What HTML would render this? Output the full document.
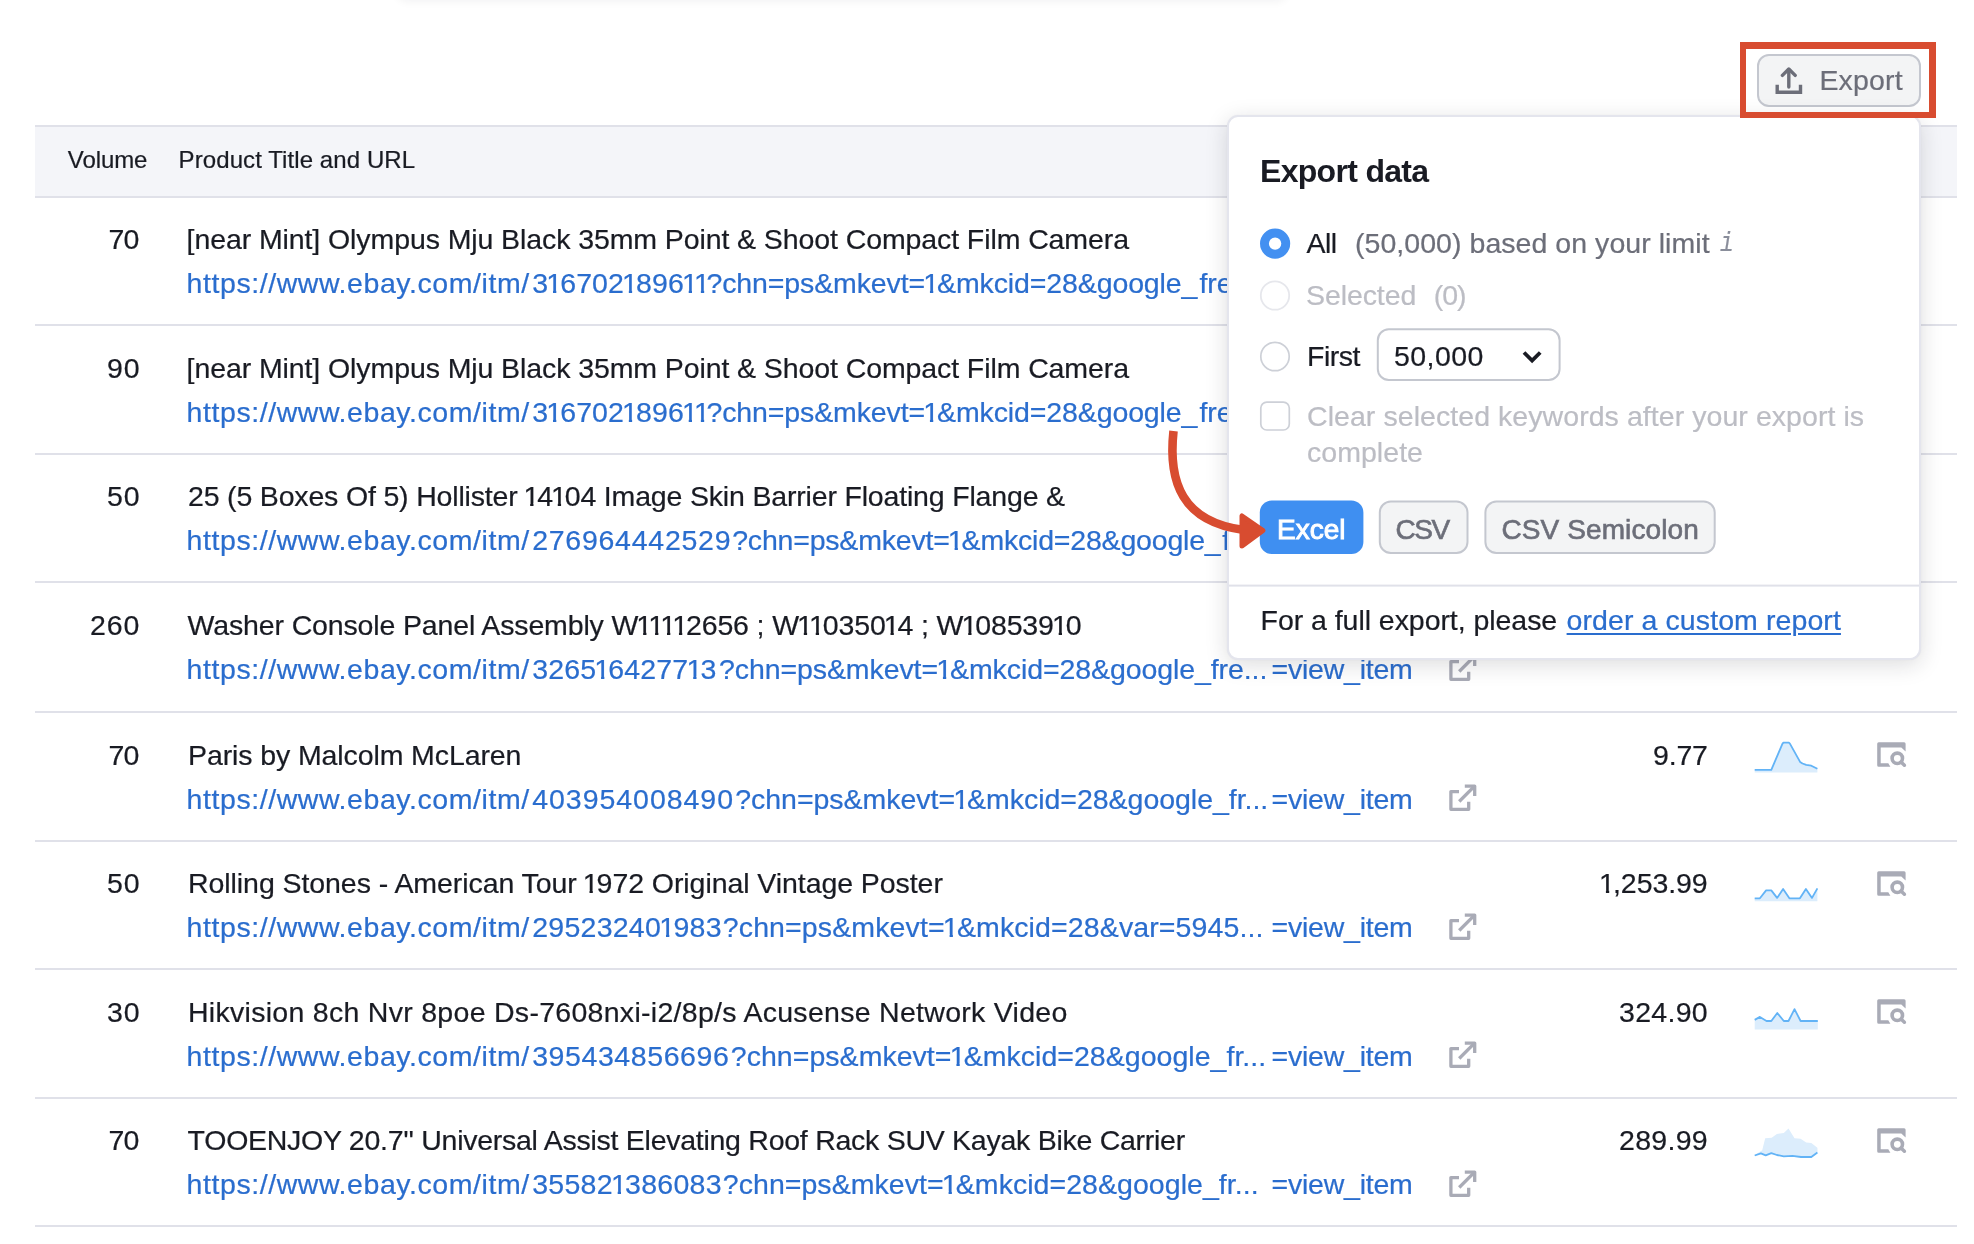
<!DOCTYPE html>
<html lang="en"><head><meta charset="utf-8"><title>Export data</title>
<style>
*{box-sizing:border-box;margin:0;padding:0}
html,body{width:1974px;height:1244px;overflow:hidden;background:#fff}
body{position:relative;font-family:"Liberation Sans",Arial,sans-serif;color:#191b23;font-size:28px}
.abs{position:absolute}
.t{position:absolute;white-space:nowrap;color:#191b23;-webkit-text-stroke:0.22px currentColor}
.t i{font-style:normal;display:inline-block;margin:0 -1.9px;clip-path:polygon(0 0,100% 0,100% 24px,10.1px 24px,10.1px 100%,6.8px 100%,6.8px 24px,0 24px)}
.t.lk{color:#2a6dce}
.t.g{color:#6c6e79}
.t.g2{color:#8a8e9b}
.t.d{color:#bcbdc4}
.t.b{font-weight:bold;-webkit-text-stroke:0}
.t.w{color:#fff}
.t.m{-webkit-text-stroke:0.65px currentColor}
.t.m.w{-webkit-text-stroke:0.95px currentColor}
.t.ul span{text-decoration:underline;text-decoration-thickness:2px;text-underline-offset:3px}
.topshadow{position:absolute;left:396px;top:-12px;width:892px;height:12px;border-radius:0 0 14px 14px;box-shadow:0 2px 8px rgba(25,27,35,.05)}
.thead{position:absolute;left:35px;top:125px;width:1922px;height:73px;background:#f4f5f9;border-top:2px solid #e0e1e9;border-bottom:2px solid #e0e1e9}
.sep{position:absolute;left:35px;width:1922px;height:2px;background:#e0e1e9}
.ext{position:absolute;left:1449px}
.serp{position:absolute;left:1877px}
.spark{position:absolute;left:1754px}
#root{position:absolute;left:0;top:0;width:1974px;height:1244px;overflow:hidden;will-change:transform}
</style></head><body><div id="root">
<div class="topshadow"></div>
<div class="thead"></div>

<div class="t " style="left:67.80px;top:145.00px;font-size:24px;line-height:29px;letter-spacing:-0.080px;"><span id="h1">Volume</span></div>
<div class="t " style="left:178.60px;top:145.00px;font-size:24px;line-height:29px;letter-spacing:0.085px;"><span id="h2">Product Title and URL</span></div>
<div class="t " style="left:108.60px;top:222.00px;font-size:28.5px;line-height:34px;letter-spacing:-1.000px;"><span id="v0">70</span></div>
<div class="t " style="left:186.60px;top:222.00px;font-size:28.5px;line-height:34px;letter-spacing:-0.094px;"><span id="t0_0">[near Mint] Olympus Mju Black 35mm Point &amp; Shoot Compact Film Camera</span></div>
<div class="t lk" style="left:186.60px;top:266.00px;font-size:28.5px;line-height:34px;letter-spacing:0.571px;"><span id="u0_0">https://www.ebay.com/itm/</span></div>
<div class="t lk" style="left:532.20px;top:266.00px;font-size:28.5px;line-height:34px;letter-spacing:0.064px;"><span id="u0_1">3<i>1</i>6702<i>1</i>896<i>1</i><i>1</i></span></div>
<div class="t lk" style="left:706.40px;top:266.00px;font-size:28.5px;line-height:34px;letter-spacing:-0.113px;"><span id="u0_2">?chn=ps&amp;mkevt=<i>1</i>&amp;mkcid=28&amp;google_</span></div>
<div class="t lk" style="left:1199.40px;top:266.00px;font-size:28.5px;line-height:34px;"><span id="u0_3">free_listing_action</span></div>
<div class="t " style="left:107.00px;top:351.00px;font-size:28.5px;line-height:34px;letter-spacing:0.800px;"><span id="v1">90</span></div>
<div class="t " style="left:186.60px;top:351.00px;font-size:28.5px;line-height:34px;letter-spacing:-0.094px;"><span id="t1_0">[near Mint] Olympus Mju Black 35mm Point &amp; Shoot Compact Film Camera</span></div>
<div class="t lk" style="left:186.60px;top:395.00px;font-size:28.5px;line-height:34px;letter-spacing:0.571px;"><span id="u1_0">https://www.ebay.com/itm/</span></div>
<div class="t lk" style="left:532.20px;top:395.00px;font-size:28.5px;line-height:34px;letter-spacing:0.064px;"><span id="u1_1">3<i>1</i>6702<i>1</i>896<i>1</i><i>1</i></span></div>
<div class="t lk" style="left:706.40px;top:395.00px;font-size:28.5px;line-height:34px;letter-spacing:-0.113px;"><span id="u1_2">?chn=ps&amp;mkevt=<i>1</i>&amp;mkcid=28&amp;google_</span></div>
<div class="t lk" style="left:1199.40px;top:395.00px;font-size:28.5px;line-height:34px;"><span id="u1_3">free_listing_action</span></div>
<div class="t " style="left:107.00px;top:479.00px;font-size:28.5px;line-height:34px;letter-spacing:0.800px;"><span id="v2">50</span></div>
<div class="t " style="left:188.00px;top:479.00px;font-size:28.5px;line-height:34px;letter-spacing:-0.174px;"><span id="t2_0">25 (5 Boxes Of 5) Hollister <i>1</i>4<i>1</i>04 Image Skin Barrier Floating Flange &amp;</span></div>
<div class="t lk" style="left:186.60px;top:523.00px;font-size:28.5px;line-height:34px;letter-spacing:0.571px;"><span id="u2_0">https://www.ebay.com/itm/</span></div>
<div class="t lk" style="left:532.20px;top:523.00px;font-size:28.5px;line-height:34px;letter-spacing:0.736px;"><span id="u2_1">276964442529</span></div>
<div class="t lk" style="left:732.20px;top:523.00px;font-size:28.5px;line-height:34px;letter-spacing:-0.194px;"><span id="u2_2">?chn=ps&amp;mkevt=<i>1</i>&amp;mkcid=28&amp;google_</span></div>
<div class="t lk" style="left:1222.20px;top:523.00px;font-size:28.5px;line-height:34px;"><span id="u2_3">free_listing_action</span></div>
<div class="t " style="left:90.00px;top:608.00px;font-size:28.5px;line-height:34px;letter-spacing:0.900px;"><span id="v3">260</span></div>
<div class="t " style="left:187.60px;top:608.00px;font-size:28.5px;line-height:34px;letter-spacing:-0.145px;"><span id="t3_0">Washer Console Panel Assembly W<i>1</i><i>1</i><i>1</i><i>1</i>2656 ; W<i>1</i><i>1</i>0350<i>1</i>4 ; W<i>1</i>08539<i>1</i>0</span></div>
<div class="t lk" style="left:186.60px;top:652.00px;font-size:28.5px;line-height:34px;letter-spacing:0.571px;"><span id="u3_0">https://www.ebay.com/itm/</span></div>
<div class="t lk" style="left:532.20px;top:652.00px;font-size:28.5px;line-height:34px;letter-spacing:0.136px;"><span id="u3_1">3265<i>1</i>64277<i>1</i>3</span></div>
<div class="t lk" style="left:719.00px;top:652.00px;font-size:28.5px;line-height:34px;letter-spacing:-0.086px;"><span id="u3_2">?chn=ps&amp;mkevt=<i>1</i>&amp;mkcid=28&amp;google_fre...</span></div>
<div class="t lk" style="left:1271.60px;top:652.00px;font-size:28.5px;line-height:34px;letter-spacing:-0.233px;"><span id="w3">=view_item</span></div>
<div class="t " style="left:108.60px;top:738.00px;font-size:28.5px;line-height:34px;letter-spacing:-1.000px;"><span id="v4">70</span></div>
<div class="t " style="left:188.00px;top:738.00px;font-size:28.5px;line-height:34px;letter-spacing:-0.104px;"><span id="t4_0">Paris by Malcolm McLaren</span></div>
<div class="t lk" style="left:186.60px;top:782.00px;font-size:28.5px;line-height:34px;letter-spacing:0.571px;"><span id="u4_0">https://www.ebay.com/itm/</span></div>
<div class="t lk" style="left:532.20px;top:782.00px;font-size:28.5px;line-height:34px;letter-spacing:0.964px;"><span id="u4_1">403954008490</span></div>
<div class="t lk" style="left:735.20px;top:782.00px;font-size:28.5px;line-height:34px;letter-spacing:-0.028px;"><span id="u4_2">?chn=ps&amp;mkevt=<i>1</i>&amp;mkcid=28&amp;google_fr...</span></div>
<div class="t lk" style="left:1271.60px;top:782.00px;font-size:28.5px;line-height:34px;letter-spacing:-0.233px;"><span id="w4">=view_item</span></div>
<div class="t " style="left:1653.00px;top:738.00px;font-size:28.5px;line-height:34px;letter-spacing:-0.167px;"><span id="p4">9.77</span></div>
<div class="t " style="left:107.00px;top:866.00px;font-size:28.5px;line-height:34px;letter-spacing:0.800px;"><span id="v5">50</span></div>
<div class="t " style="left:188.00px;top:866.00px;font-size:28.5px;line-height:34px;letter-spacing:-0.067px;"><span id="t5_0">Rolling Stones - American Tour <i>1</i>972 Original Vintage Poster</span></div>
<div class="t lk" style="left:186.60px;top:910.00px;font-size:28.5px;line-height:34px;letter-spacing:0.571px;"><span id="u5_0">https://www.ebay.com/itm/</span></div>
<div class="t lk" style="left:532.20px;top:910.00px;font-size:28.5px;line-height:34px;letter-spacing:0.264px;"><span id="u5_1">29523240<i>1</i>983</span></div>
<div class="t lk" style="left:722.80px;top:910.00px;font-size:28.5px;line-height:34px;letter-spacing:0.120px;"><span id="u5_2">?chn=ps&amp;mkevt=<i>1</i>&amp;mkcid=28&amp;var=5945...</span></div>
<div class="t lk" style="left:1271.60px;top:910.00px;font-size:28.5px;line-height:34px;letter-spacing:-0.233px;"><span id="w5">=view_item</span></div>
<div class="t " style="left:1601.00px;top:866.00px;font-size:28.5px;line-height:34px;letter-spacing:-0.071px;"><span id="p5"><i>1</i>,253.99</span></div>
<div class="t " style="left:107.00px;top:995.00px;font-size:28.5px;line-height:34px;letter-spacing:0.800px;"><span id="v6">30</span></div>
<div class="t " style="left:188.00px;top:995.00px;font-size:28.5px;line-height:34px;letter-spacing:0.287px;"><span id="t6_0">Hikvision 8ch Nvr 8poe Ds-7608nxi-i2/8p/s Acusense Network Video</span></div>
<div class="t lk" style="left:186.60px;top:1039.00px;font-size:28.5px;line-height:34px;letter-spacing:0.571px;"><span id="u6_0">https://www.ebay.com/itm/</span></div>
<div class="t lk" style="left:532.20px;top:1039.00px;font-size:28.5px;line-height:34px;letter-spacing:0.582px;"><span id="u6_1">395434856696</span></div>
<div class="t lk" style="left:730.80px;top:1039.00px;font-size:28.5px;line-height:34px;letter-spacing:0.036px;"><span id="u6_2">?chn=ps&amp;mkevt=<i>1</i>&amp;mkcid=28&amp;google_fr...</span></div>
<div class="t lk" style="left:1271.60px;top:1039.00px;font-size:28.5px;line-height:34px;letter-spacing:-0.233px;"><span id="w6">=view_item</span></div>
<div class="t " style="left:1619.00px;top:995.00px;font-size:28.5px;line-height:34px;letter-spacing:0.300px;"><span id="p6">324.90</span></div>
<div class="t " style="left:108.60px;top:1123.00px;font-size:28.5px;line-height:34px;letter-spacing:-1.000px;"><span id="v7">70</span></div>
<div class="t " style="left:187.60px;top:1123.00px;font-size:28.5px;line-height:34px;letter-spacing:-0.265px;"><span id="t7_0">TOOENJOY 20.7'' Universal Assist Elevating Roof Rack SUV Kayak Bike Carrier</span></div>
<div class="t lk" style="left:186.60px;top:1167.00px;font-size:28.5px;line-height:34px;letter-spacing:0.571px;"><span id="u7_0">https://www.ebay.com/itm/</span></div>
<div class="t lk" style="left:532.20px;top:1167.00px;font-size:28.5px;line-height:34px;letter-spacing:0.264px;"><span id="u7_1">35582<i>1</i>386083</span></div>
<div class="t lk" style="left:722.80px;top:1167.00px;font-size:28.5px;line-height:34px;letter-spacing:0.047px;"><span id="u7_2">?chn=ps&amp;mkevt=<i>1</i>&amp;mkcid=28&amp;google_fr...</span></div>
<div class="t lk" style="left:1271.60px;top:1167.00px;font-size:28.5px;line-height:34px;letter-spacing:-0.233px;"><span id="w7">=view_item</span></div>
<div class="t " style="left:1619.00px;top:1123.00px;font-size:28.5px;line-height:34px;letter-spacing:0.300px;"><span id="p7">289.99</span></div>
<div class="sep" style="top:324px"></div>
<div class="sep" style="top:453px"></div>
<div class="sep" style="top:581px"></div>
<svg class="ext" style="top:654px" width="30" height="30" viewBox="0 0 30 30" fill="none" stroke="#a9abb6" stroke-width="3.300" stroke-linejoin="round"><path d="M10 7.600 H1.900 V25.300 H19.700 V17.700"/><path d="M10.200 17.500 L25.300 2.400"/><path d="M15.800 2.100 H25.700 V11.900"/></svg>
<div class="sep" style="top:711px"></div>
<svg class="ext" style="top:784px" width="30" height="30" viewBox="0 0 30 30" fill="none" stroke="#a9abb6" stroke-width="3.300" stroke-linejoin="round"><path d="M10 7.600 H1.900 V25.300 H19.700 V17.700"/><path d="M10.200 17.500 L25.300 2.400"/><path d="M15.800 2.100 H25.700 V11.900"/></svg>
<svg class="spark" style="top:739px" width="66" height="36" viewBox="-1 0 66 36"><path d="M-0.300 30.800 L16.300 30.800 L27.400 4.900 L28.400 3.700 L33.900 3.700 L34.900 4.600 L45.100 22.900 L47.500 24.500 L51.200 25.900 L56.300 26.700 L62.400 29.800 L62.400 33.400 L-0.300 33.400 Z" fill="#dcedfc"/><path d="M-0.300 30.800 L16.300 30.800 L27.400 4.900 L28.400 3.700 L33.900 3.700 L34.900 4.600 L45.100 22.900 L47.500 24.500 L51.200 25.900 L56.300 26.700 L62.400 29.800" fill="none" stroke="#62b3f6" stroke-width="1.800" stroke-linejoin="round"/></svg>
<svg class="serp" style="top:742px" width="30" height="26" viewBox="0 0 30 26"><path d="M1.700 0.200 H27.100 Q28.600 0.200 28.600 1.700 V9.500 L24.300 5.500 H3.700 V21.200 H11.300 L13.400 24.800 H1.700 Q0.200 24.800 0.200 23.300 V1.700 Q0.200 0.200 1.700 0.200 Z" fill="#a9abb6"/><circle cx="20.300" cy="16.300" r="5.200" fill="none" stroke="#a9abb6" stroke-width="3.600"/><path d="M24 20 L27.400 23.200" stroke="#a9abb6" stroke-width="3.500" stroke-linecap="round"/></svg>
<div class="sep" style="top:840px"></div>
<svg class="ext" style="top:913px" width="30" height="30" viewBox="0 0 30 30" fill="none" stroke="#a9abb6" stroke-width="3.300" stroke-linejoin="round"><path d="M10 7.600 H1.900 V25.300 H19.700 V17.700"/><path d="M10.200 17.500 L25.300 2.400"/><path d="M15.800 2.100 H25.700 V11.900"/></svg>
<svg class="spark" style="top:868px" width="66" height="36" viewBox="-1 0 66 36"><path d="M-0.300 30.300 L4.900 30.300 L11.100 22.400 L16.300 22.400 L22.100 29.900 L28.100 20.900 L34.400 30.300 L44.900 30.300 L50.900 20.900 L57.000 29.900 L62.400 20.400 L62.400 33.300 L-0.300 33.300 Z" fill="#dcedfc"/><path d="M-0.300 30.300 L4.900 30.300 L11.100 22.400 L16.300 22.400 L22.100 29.900 L28.100 20.900 L34.400 30.300 L44.900 30.300 L50.900 20.900 L57.000 29.900 L62.400 20.400" fill="none" stroke="#62b3f6" stroke-width="1.800" stroke-linejoin="round"/></svg>
<svg class="serp" style="top:871px" width="30" height="26" viewBox="0 0 30 26"><path d="M1.700 0.200 H27.100 Q28.600 0.200 28.600 1.700 V9.500 L24.300 5.500 H3.700 V21.200 H11.300 L13.400 24.800 H1.700 Q0.200 24.800 0.200 23.300 V1.700 Q0.200 0.200 1.700 0.200 Z" fill="#a9abb6"/><circle cx="20.300" cy="16.300" r="5.200" fill="none" stroke="#a9abb6" stroke-width="3.600"/><path d="M24 20 L27.400 23.200" stroke="#a9abb6" stroke-width="3.500" stroke-linecap="round"/></svg>
<div class="sep" style="top:968px"></div>
<svg class="ext" style="top:1041px" width="30" height="30" viewBox="0 0 30 30" fill="none" stroke="#a9abb6" stroke-width="3.300" stroke-linejoin="round"><path d="M10 7.600 H1.900 V25.300 H19.700 V17.700"/><path d="M10.200 17.500 L25.300 2.400"/><path d="M15.800 2.100 H25.700 V11.900"/></svg>
<svg class="spark" style="top:996px" width="66" height="36" viewBox="-1 0 66 36"><path d="M-0.300 23.900 L4.900 20.900 L11.500 25.000 L16.300 25.000 L22.300 17.000 L28.800 25.000 L33.500 25.000 L39.500 13.100 L45.600 25.000 L62.800 25.000 L62.800 33.400 L-0.300 33.400 Z" fill="#dcedfc"/><path d="M-0.300 23.900 L4.900 20.900 L11.500 25.000 L16.300 25.000 L22.300 17.000 L28.800 25.000 L33.500 25.000 L39.500 13.100 L45.600 25.000 L62.800 25.000" fill="none" stroke="#62b3f6" stroke-width="1.800" stroke-linejoin="round"/></svg>
<svg class="serp" style="top:999px" width="30" height="26" viewBox="0 0 30 26"><path d="M1.700 0.200 H27.100 Q28.600 0.200 28.600 1.700 V9.500 L24.300 5.500 H3.700 V21.200 H11.300 L13.400 24.800 H1.700 Q0.200 24.800 0.200 23.300 V1.700 Q0.200 0.200 1.700 0.200 Z" fill="#a9abb6"/><circle cx="20.300" cy="16.300" r="5.200" fill="none" stroke="#a9abb6" stroke-width="3.600"/><path d="M24 20 L27.400 23.200" stroke="#a9abb6" stroke-width="3.500" stroke-linecap="round"/></svg>
<div class="sep" style="top:1097px"></div>
<svg class="ext" style="top:1170px" width="30" height="30" viewBox="0 0 30 30" fill="none" stroke="#a9abb6" stroke-width="3.300" stroke-linejoin="round"><path d="M10 7.600 H1.900 V25.300 H19.700 V17.700"/><path d="M10.200 17.500 L25.300 2.400"/><path d="M15.800 2.100 H25.700 V11.900"/></svg>
<svg class="spark" style="top:1125px" width="66" height="36" viewBox="-1 0 66 36"><path d="M-0.300 30.000 L7.200 25.300 L10.200 13.300 L16.700 12.800 L21.900 8.900 L28.800 8.100 L33.500 3.400 L39.500 13.300 L45.600 13.700 L51.200 17.600 L56.300 18.000 L62.400 22.700 L62.600 27.500 L62.400 27.500 L56.300 32.000 L46.000 32.000 L37.400 30.900 L28.800 31.300 L21.900 30.000 L16.300 28.100 L10.700 30.300 L5.900 28.300 L-0.300 30.500 Z" fill="#dcedfc"/><path d="M-0.300 30.500 L5.900 28.300 L10.700 30.300 L16.300 28.100 L21.900 30.000 L28.800 31.300 L37.400 30.900 L46.000 32.000 L56.300 32.000 L62.400 27.500" fill="none" stroke="#62b3f6" stroke-width="1.800" stroke-linejoin="round"/></svg>
<svg class="serp" style="top:1128px" width="30" height="26" viewBox="0 0 30 26"><path d="M1.700 0.200 H27.100 Q28.600 0.200 28.600 1.700 V9.500 L24.300 5.500 H3.700 V21.200 H11.300 L13.400 24.800 H1.700 Q0.200 24.800 0.200 23.300 V1.700 Q0.200 0.200 1.700 0.200 Z" fill="#a9abb6"/><circle cx="20.300" cy="16.300" r="5.200" fill="none" stroke="#a9abb6" stroke-width="3.600"/><path d="M24 20 L27.400 23.200" stroke="#a9abb6" stroke-width="3.500" stroke-linecap="round"/></svg>
<div class="sep" style="top:1225px"></div>
<style>
.expbtn{position:absolute;left:1757px;top:54px;width:164px;height:53px;border:2px solid #c4c7cf;border-radius:12px;background:#f3f4f5}
.redbox{position:absolute;left:1740px;top:42px;width:196px;height:76px;border:solid #d84c30;border-width:7px 7px 6px 6px}
.pop{position:absolute;left:1227px;top:115px;width:694px;height:545px;background:#fff;border:2px solid #e4e5ed;border-radius:11px;box-shadow:0 5px 22px rgba(25,27,35,.15),0 0 2px rgba(25,27,35,.06)}
.shapes{position:absolute;left:1229px;top:117px}
</style>
<div class="expbtn">
<svg class="abs" style="left:16px;top:11px" width="30" height="30" viewBox="0 0 30 30" fill="none" stroke="#6c6e79" stroke-width="3.400"><path d="M2.200 17.700 V25.200 H25.500 V17.700"/><path d="M13.800 20 V3" stroke-linecap="round"/><path d="M7.400 8.400 L13.800 2 L20.200 8.400" stroke-linejoin="round" stroke-linecap="round"/></svg>
</div>
<div class="pop"></div>
<svg class="shapes" width="690" height="541" viewBox="1229 117 690 541">
<circle cx="1275.100" cy="243.600" r="10.650" fill="#fff" stroke="#4390f1" stroke-width="8.900"/>
<circle cx="1275" cy="295.500" r="14.200" fill="#fff" stroke="#e6e7ec" stroke-width="1.800"/>
<circle cx="1275" cy="356.500" r="14.200" fill="#fff" stroke="#cdd0d7" stroke-width="1.700"/>
<rect x="1377.800" y="329.200" width="181.800" height="50.700" rx="11" fill="#fff" stroke="#c4c7cf" stroke-width="2"/>
<path d="M1524 352.500 L1532.100 360.600 L1540.200 352.500" fill="none" stroke="#191b23" stroke-width="3.800"/>
<rect x="1260.800" y="402.100" width="28.500" height="27.900" rx="6" fill="#fff" stroke="#cdd0d7" stroke-width="1.700"/>
<rect x="1259.800" y="500.600" width="103.600" height="53.400" rx="12" fill="#3f8ff1"/>
<rect x="1379.800" y="501.600" width="87.700" height="51.400" rx="11" fill="#f3f4f5" stroke="#c4c7cf" stroke-width="2"/>
<rect x="1485.400" y="501.600" width="229.300" height="51.400" rx="11" fill="#f3f4f5" stroke="#c4c7cf" stroke-width="2"/>
<rect x="1229" y="584.600" width="690" height="2" fill="#e0e1e9"/>
</svg>
<div class="t g" style="left:1819.40px;top:63.00px;font-size:28.5px;line-height:34px;letter-spacing:0.160px;"><span id="eb">Export</span></div>
<div class="t b" style="left:1260.00px;top:152.00px;font-size:32px;line-height:38px;letter-spacing:-0.690px;"><span id="ph">Export data</span></div>
<div class="t " style="left:1306.60px;top:226.00px;font-size:28.5px;line-height:34px;letter-spacing:-0.550px;"><span id="l1">All</span></div>
<div class="t g" style="left:1355.00px;top:226.00px;font-size:28.5px;line-height:34px;letter-spacing:0.048px;"><span id="l1b">(50,000) based on your limit</span></div>
<div class="t g2" style="left:1719.80px;top:228.00px;font-size:27px;line-height:32px;font-family:'Liberation Mono','DejaVu Sans Mono',monospace;font-style:italic;transform:scaleX(.84);transform-origin:0 0;"><span id="l1c">i</span></div>
<div class="t d" style="left:1306.00px;top:278.00px;font-size:28.5px;line-height:34px;letter-spacing:-0.086px;"><span id="l2">Selected</span></div>
<div class="t d" style="left:1433.80px;top:278.00px;font-size:28.5px;line-height:34px;letter-spacing:-1.050px;"><span id="l2b">(0)</span></div>
<div class="t " style="left:1307.00px;top:339.00px;font-size:28.5px;line-height:34px;letter-spacing:-0.475px;"><span id="l3">First</span></div>
<div class="t " style="left:1394.00px;top:339.00px;font-size:28.5px;line-height:34px;letter-spacing:0.420px;"><span id="sv">50,000</span></div>
<div class="t d" style="left:1307.00px;top:399.00px;font-size:28.5px;line-height:34px;letter-spacing:0.063px;"><span id="c1">Clear selected keywords after your export is</span></div>
<div class="t d" style="left:1307.00px;top:435.00px;font-size:28.5px;line-height:34px;letter-spacing:0.043px;"><span id="c2">complete</span></div>
<div class="t m w" style="left:1277.00px;top:513.00px;font-size:28px;line-height:33px;letter-spacing:0.025px;"><span id="b1">Excel</span></div>
<div class="t m g" style="left:1395.60px;top:513.00px;font-size:28px;line-height:33px;letter-spacing:-1.550px;"><span id="b2">CSV</span></div>
<div class="t m g" style="left:1501.40px;top:513.00px;font-size:28px;line-height:33px;letter-spacing:0.108px;"><span id="b3">CSV Semicolon</span></div>
<div class="t " style="left:1260.60px;top:603.00px;font-size:28.5px;line-height:34px;letter-spacing:-0.050px;"><span id="f1">For a full export, please</span></div>
<div class="t lk ul" style="left:1566.60px;top:603.00px;font-size:28.5px;line-height:34px;letter-spacing:0.090px;"><span id="f2">order a custom report</span></div>
<div class="redbox"></div>
<svg class="abs" style="left:1150px;top:420px" width="130" height="140" viewBox="0 0 130 140"><path d="M23.500 11 C18 62 32 102 94 110" fill="none" stroke="#d84c30" stroke-width="8.600"/><path d="M92 96 V126 L113 110.500 Z" fill="#d84c30" stroke="#d84c30" stroke-width="5" stroke-linejoin="round"/></svg>

</div></body></html>
